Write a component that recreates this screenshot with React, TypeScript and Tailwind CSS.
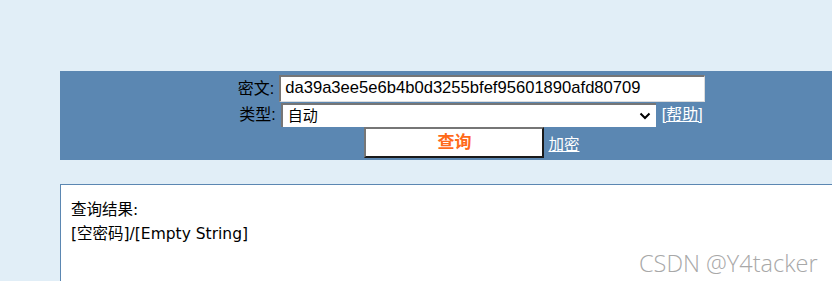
import React from "react";

export default function App() {
  return (
    <div className="w-[832px] h-[281px] overflow-hidden bg-[#e1eef7] relative" style={{ fontFamily: '"Liberation Sans", "Noto Sans CJK SC", sans-serif' }}>
      <div className="pt-[71px] pl-[60px]">
        <div className="w-[822px] h-[89px] bg-[#5b87b2] flex flex-col items-center pt-[3px]">
          <div className="flex items-center h-[28px] ml-[1px]">
            <span className="text-[16px] text-black mr-[5px] pt-[1px]">密文:</span>
            <div className="w-[426px] h-[27px] bg-white border-t-2 border-l-2 border-[#767676] border-b border-r border-b-[#dcdcdc] border-r-[#dcdcdc] flex items-center pl-[4px] text-[16.6px] text-black">
              da39a3ee5e6b4b0d3255bfef95601890afd80709
            </div>
          </div>
          <div className="flex items-center h-[24px] mt-[1px]">
            <span className="text-[16px] text-black mr-[5px]">类型:</span>
            <div className="w-[375px] h-[24px] bg-white border-t-2 border-l-2 border-[#767676] flex items-center justify-between pl-[5px] pr-[5px] text-[15px] text-black">
              <span>自动</span>
              <svg width="12" height="8" viewBox="0 0 12 8"><path d="M1.5 1.5 L6 6 L10.5 1.5" stroke="#000" strokeWidth="2" fill="none" /></svg>
            </div>
            <a className="ml-[6px] text-[16px] text-white underline">[帮助]</a>
          </div>
          <div className="flex items-center h-[31px] ml-[2px]">
            <div className="w-[180px] h-[31px] bg-white border-t-2 border-l-2 border-[#767676] border-b-2 border-r-2 border-b-[#1a1a1a] border-r-[#1a1a1a] flex items-center justify-center text-[17px] font-bold text-[#ff6a1a]">
              查询
            </div>
            <a className="ml-[4px] text-[15.5px] text-white underline pt-[4px]">加密</a>
          </div>
        </div>
        <div className="mt-[24px] w-[800px] h-[120px] bg-white border-t border-l border-[#5b87b2] pl-[10px] pt-[13px] text-[15.5px] text-black leading-[24px]" style={{ fontFamily: '"DejaVu Sans", "Noto Sans CJK SC", sans-serif' }}>
          <div>查询结果:</div>
          <div>[空密码]/[Empty String]</div>
        </div>
      </div>
      <div className="absolute left-[639px] top-[246px] text-[23.5px] font-light text-[#a8a8a8]" style={{ fontFamily: '"Open Sans", sans-serif' }}>
        CSDN @Y4tacker
      </div>
    </div>
  );
}
